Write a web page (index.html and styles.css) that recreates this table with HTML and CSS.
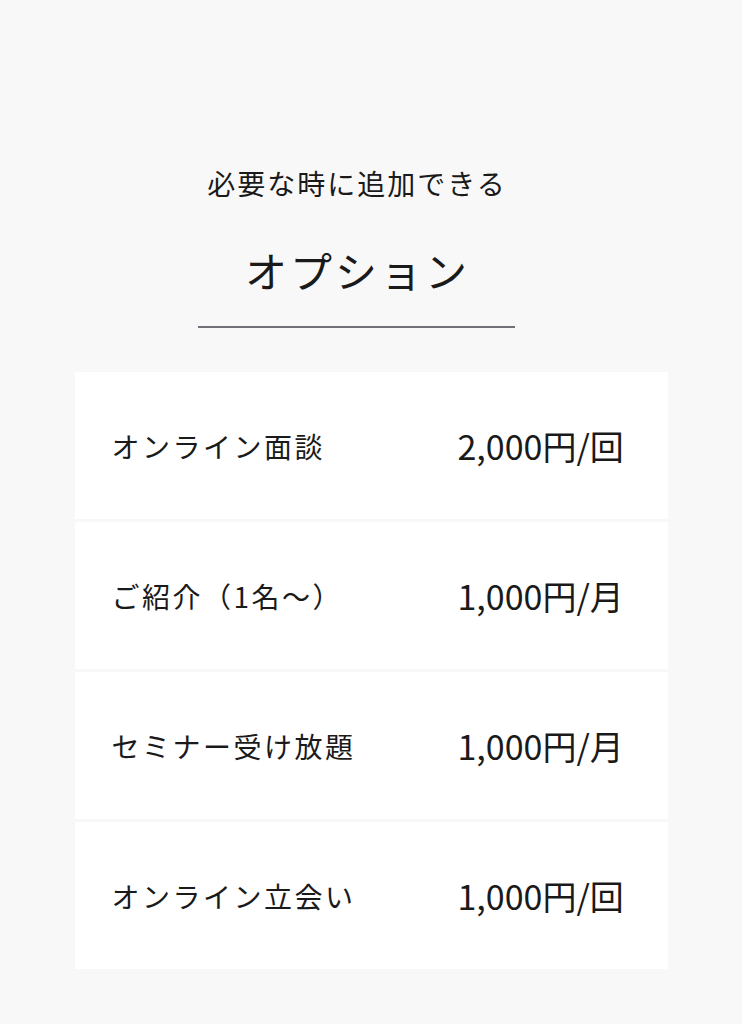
FILE: index.html
```html
<!DOCTYPE html>
<html lang="ja">
<head>
<meta charset="utf-8">
<link rel="stylesheet" href="styles.css">
</head>
<body>
<main class="page">
  <header class="head">
    <p class="sub">必要な時に追加できる</p>
    <h1 class="title">オプション</h1>
    <div class="rule"></div>
  </header>
  <ul class="list">
    <li class="row"><span class="name">オンライン面談</span><span class="price">2,000円/回</span></li>
    <li class="row"><span class="name">ご紹介（1名～）</span><span class="price">1,000円/月</span></li>
    <li class="row"><span class="name">セミナー受け放題</span><span class="price">1,000円/月</span></li>
    <li class="row"><span class="name">オンライン立会い</span><span class="price">1,000円/回</span></li>
  </ul>
</main>
</body>
</html>
```
FILE: styles.css
```css
html, body {
  margin: 0;
  padding: 0;
  background: #f8f8f8;
}
body {
  font-family: "Noto Sans CJK JP", "Noto Sans", sans-serif;
  color: #1a1a1a;
}
.page {
  width: 742px;
  height: 1024px;
  display: flex;
  flex-direction: column;
  align-items: center;
  padding-top: 164px;
  box-sizing: border-box;
}
.head {
  align-self: stretch;
  display: flex;
  flex-direction: column;
  align-items: center;
  padding-right: 30px;
}
.sub {
  margin: 0;
  font-size: 28px;
  line-height: 38px;
  letter-spacing: 2px;
  text-indent: 2px;
}
.title {
  margin: 40px 0 0;
  font-size: 42px;
  font-weight: 400;
  line-height: 56px;
  letter-spacing: 3px;
  text-indent: 3px;
}
.rule {
  width: 317px;
  height: 2px;
  background: #707078;
  margin-top: 28px;
}
.list {
  list-style: none;
  margin: 44px 0 0;
  padding: 0;
  width: 593px;
  display: flex;
  flex-direction: column;
  gap: 3px;
}
.row {
  height: 147px;
  background: #fff;
  display: grid;
  grid-template-columns: 346px 1fr;
  align-items: center;
  padding: 0 0 0 37px;
}
.name {
  font-size: 28px;
  letter-spacing: 2.5px;
}
.price {
  font-size: 34px;
  letter-spacing: 0;
}
```
